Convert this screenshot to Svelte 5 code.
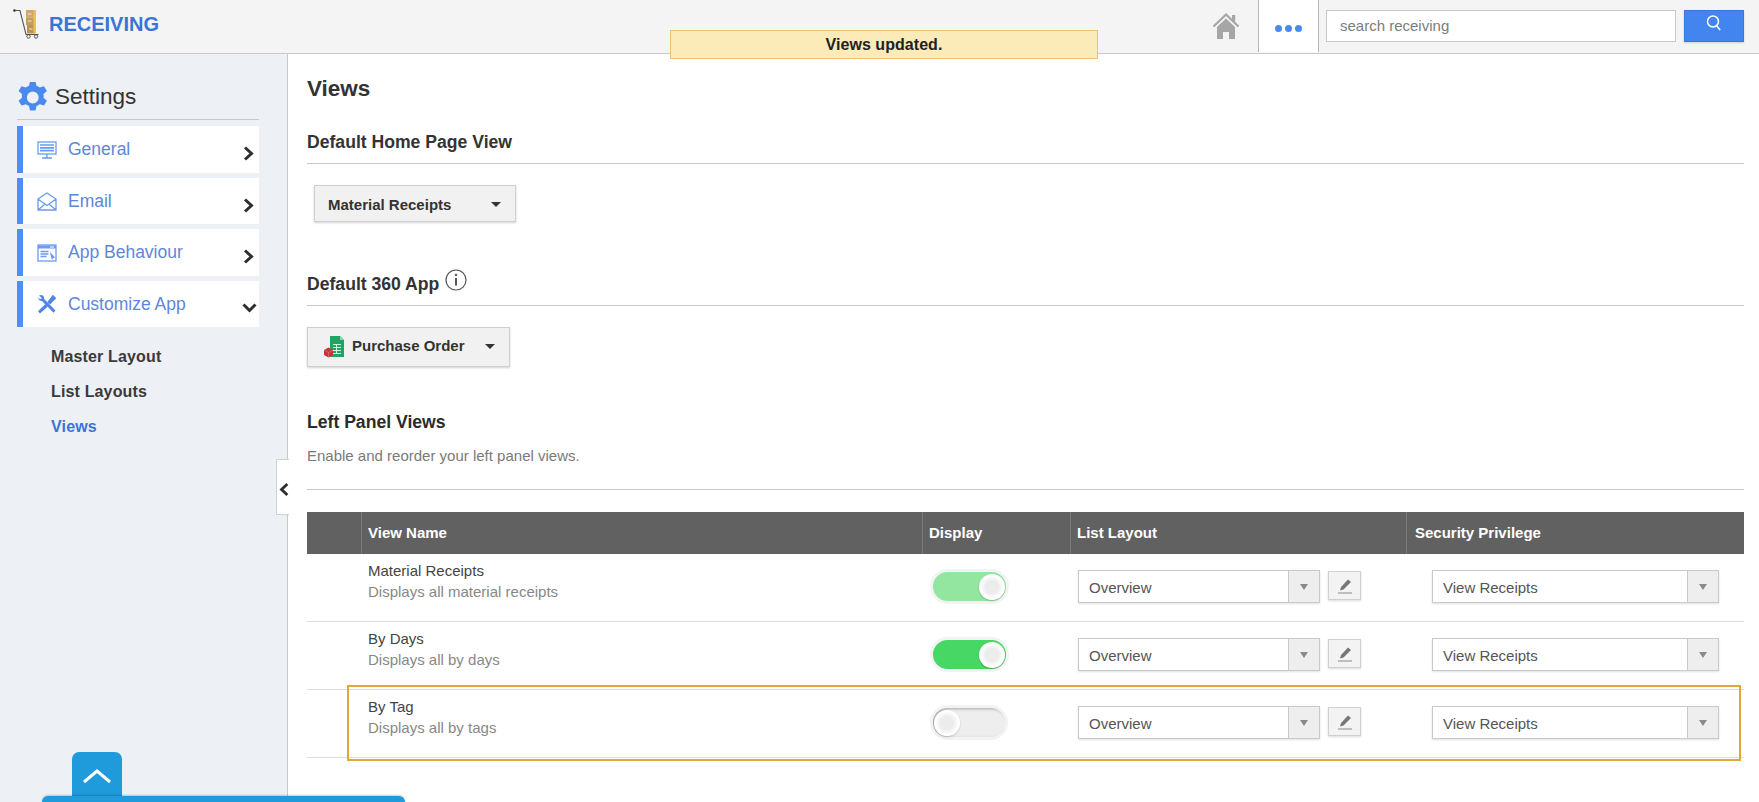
<script>
  const rows = [
    { title: 'Material Receipts', desc: 'Displays all material receipts', state: 'pale' },
    { title: 'By Days', desc: 'Displays all by days', state: 'on' },
    { title: 'By Tag', desc: 'Displays all by tags', state: 'off' }
  ];
</script>

<div class="page">
  <header class="top">
    <div class="brand">
      <svg class="logo" width="28" height="30" viewBox="0 0 28 30">
        <circle cx="1.5" cy="1.5" r="1.3" fill="#333" />
        <path d="M2 1.500H7L13 25.500H25.500" fill="none" stroke="#555" stroke-width="1.100" />
        <rect x="13" y="1" width="9" height="7.500" fill="#d0a868" />
        <rect x="13" y="8.500" width="9" height="7.500" fill="#c69c5c" />
        <rect x="14" y="16" width="8" height="8.500" fill="#bd9354" />
        <rect x="20.500" y="1" width="2.500" height="23.500" fill="#eec14a" />
        <path d="M15 5h3.500M15 12h3.500M16 20h3.500" stroke="#f5e8cc" stroke-width="1" />
        <circle cx="15.500" cy="27.500" r="1.700" fill="none" stroke="#555" />
        <circle cx="23" cy="27.500" r="1.700" fill="none" stroke="#555" />
      </svg>
      <span class="appname">RECEIVING</span>
    </div>
    <div class="tools">
      <svg class="home" width="28" height="28" viewBox="0 0 28 28">
        <path d="M1.500 14.500 14 2.500l12.500 12" fill="none" stroke="#a6a6a6" stroke-width="2.200" />
        <rect x="20" y="3" width="3.200" height="6.500" fill="#a6a6a6" />
        <path d="M14 6.500 5 15v12h6v-7h6v7h6V15z" fill="#a6a6a6" />
      </svg>
      <div class="more">
        <span></span><span></span><span></span>
      </div>
      <div class="search">search receiving</div>
      <button class="go" aria-label="Search">
        <svg width="18" height="18" viewBox="0 0 18 18" fill="none" stroke="#fff" stroke-width="1.500">
          <circle cx="8" cy="7.500" r="5.500" />
          <path d="m11.600 11.800 3.600 4.200" />
        </svg>
      </button>
    </div>
  </header>

  <div class="toast">Views updated.</div>

  <div class="body">
    <aside class="side">
      <div class="side-title">
        <svg width="31" height="31" viewBox="2 1.500 21 21">
          <path fill="#4a89f0" fill-rule="evenodd" d="M13.900 1 14.500 4a8.800 8.800 0 0 1 2.200 1.300l2.900-1 2 3.300-2.300 2a8.800 8.800 0 0 1 0 2.600l2.300 2-2 3.300-2.900-1a8.800 8.800 0 0 1-2.200 1.300l-.6 3H10.100l-.6-3a8.800 8.800 0 0 1-2.200-1.300l-2.900 1-2-3.300 2.300-2a8.800 8.800 0 0 1 0-2.600l-2.300-2 2-3.300 2.900 1a8.800 8.800 0 0 1 2.200-1.300l.6-3zM12 8a4 4 0 1 0 0 8 4 4 0 0 0 0-8z" />
        </svg>
        <span>Settings</span>
      </div>

      <nav class="menu">
        <a class="item tall">
          <svg width="20" height="18" viewBox="0 0 20 18" fill="none" stroke="#6a9bee" stroke-width="1.300">
            <rect x="1" y="1" width="18" height="12" />
            <path d="M3 4h14M3 6.800h14M3 9.600h14" stroke-width="1.700" />
            <path d="M10 13v4M5 17h10" />
          </svg>
          <span class="label">General</span>
          <svg class="chev" width="12" height="15" viewBox="0 0 12 15"><path d="M2 1.500 8.500 7.500 2 13.500" fill="none" stroke="#2e2e2e" stroke-width="3" /></svg>
        </a>
        <a class="item">
          <svg width="20" height="19" viewBox="0 0 20 19" fill="none" stroke="#6a9bee" stroke-width="1.300">
            <path d="M1 7 10 1l9 6v11H1zM1 7l9 6.500L19 7M1 18l7-6M19 18l-7-6" />
          </svg>
          <span class="label">Email</span>
          <svg class="chev" width="12" height="15" viewBox="0 0 12 15"><path d="M2 1.500 8.500 7.500 2 13.500" fill="none" stroke="#2e2e2e" stroke-width="3" /></svg>
        </a>
        <a class="item tall">
          <svg width="20" height="18" viewBox="0 0 20 18" fill="none" stroke="#6a9bee" stroke-width="1.300">
            <rect x="1" y="1" width="18" height="16" />
            <path d="M1 3h18" stroke-width="3" />
            <path d="M13 3h4" stroke="#fff" stroke-width="1" />
            <path d="M3.500 7.500h8M3.500 10h8M3.500 12.500h6" stroke-width="1.500" />
            <path d="m14 10 3 3.200-1.400.2-.4 1.700z" fill="#6a9bee" />
          </svg>
          <span class="label">App Behaviour</span>
          <svg class="chev" width="12" height="15" viewBox="0 0 12 15"><path d="M2 1.500 8.500 7.500 2 13.500" fill="none" stroke="#2e2e2e" stroke-width="3" /></svg>
        </a>
        <a class="item open">
          <svg width="20" height="20" viewBox="0 0 20 20">
            <path d="M2 1.500 4.500 1C6.300 1.400 7.300 3 7 4.800L18.500 16.500 16.500 18.800 5 7C3 7.300 1.300 5.800 1 3.800L3.200 5.300 4.800 3.900z" fill="#4f86e8" />
            <path d="M15.800.8 19.300 4.300 13 10.600l-2.600-2.700zM8.400 10.100l2.400 2.400L3 19.500 1 17.300z" fill="#4f86e8" />
          </svg>
          <span class="label">Customize App</span>
          <svg class="chev down" width="15" height="10" viewBox="0 0 15 10"><path d="M1.500 1.500 7.500 7.500 13.500 1.500" fill="none" stroke="#2e2e2e" stroke-width="3" /></svg>
        </a>
      </nav>

      <ul class="sub">
        <li>Master Layout</li>
        <li>List Layouts</li>
        <li class="cur">Views</li>
      </ul>

      <div class="collapse">
        <svg width="12" height="17" viewBox="0 0 12 17"><path d="M10 1.800 3 8.500l7 6.700" fill="none" stroke="#2e2e2e" stroke-width="3.400" /></svg>
      </div>

      <div class="up">
        <svg width="30" height="16" viewBox="0 0 30 16"><path d="M2 14 15 3l13 11" fill="none" stroke="#fff" stroke-width="3" /></svg>
      </div>
      <div class="dock"></div>
    </aside>

    <main class="main">
      <h1>Views</h1>

      <h2 class="head first">Default Home Page View</h2>
      <div class="drop one">
        <span>Material Receipts</span>
        <i class="caret"></i>
      </div>

      <h2 class="head second">
        Default 360 App
        <svg class="info" width="22" height="22" viewBox="0 0 22 22" fill="none" stroke="#555" stroke-width="1.200">
          <circle cx="11" cy="11" r="10" />
          <path d="M11 9v7.500" stroke-width="2" />
          <circle cx="11" cy="6" r="1.200" fill="#555" stroke="none" />
        </svg>
      </h2>
      <div class="drop two">
        <svg width="22" height="23" viewBox="0 0 22 23">
          <path d="M7 1h10l4 4v17H7z" fill="#1fa463" />
          <path d="M17 1v4h4z" fill="#8fd6b0" />
          <path d="M10 9.500h8M10 12.500h8M10 15.500h8M10 18.500h8M13.500 9.500v9" stroke="#d6f2e2" stroke-width="1" />
          <path d="M5.500 12.500 10 15v5l-4.500 2.500L1 20v-5z" fill="#c8343c" />
          <path d="M1 15l4.500 2.500L10 15M5.500 17.500v5" stroke="#e98087" stroke-width=".6" fill="none" />
        </svg>
        <span class="po">Purchase Order</span>
        <i class="caret"></i>
      </div>

      <h2 class="plain">Left Panel Views</h2>
      <p class="hint">Enable and reorder your left panel views.</p>
      <div class="rule"></div>

      <div class="table">
        <div class="thead">
          <div></div>
          <div>View Name</div>
          <div>Display</div>
          <div>List Layout</div>
          <div>Security Privilege</div>
        </div>
        {#each rows as row}
          <div class="row">
            <div></div>
            <div class="name">
              <div class="t">{row.title}</div>
              <div class="d">{row.desc}</div>
            </div>
            <div class="tog-cell">
              <div class="toggle {row.state}"><b></b></div>
            </div>
            <div class="layout-cell">
              <div class="select wide">
                <span>Overview</span>
                <em><i></i></em>
              </div>
              <button class="edit" aria-label="Edit">
                <svg width="16" height="16" viewBox="0 0 16 16">
                  <path d="M11 1.500 14 4 6.500 11.500 3 12.500 4 9z" fill="#777" />
                  <path d="M1 15h14" stroke="#999" stroke-width="1.200" />
                </svg>
              </button>
            </div>
            <div class="priv-cell">
              <div class="select priv">
                <span>View Receipts</span>
                <em><i></i></em>
              </div>
            </div>
          </div>
        {/each}
        <div class="mark"></div>
      </div>
    </main>
  </div>
</div>

<style>
  :global(body) {
    margin: 0;
    background: #fff;
    font-family: "Liberation Sans", Arial, sans-serif;
    color: #333;
  }
  .page {
    position: relative;
    width: 1759px;
    height: 802px;
    overflow: hidden;
    display: flex;
    flex-direction: column;
  }
  .top {
    height: 53px;
    flex: none;
    box-sizing: content-box;
    background: #f4f4f4;
    border-bottom: 1px solid #c9c9c9;
    display: flex;
    justify-content: space-between;
  }
  .brand {
    display: flex;
    align-items: center;
    padding-left: 13px;
    height: 48px;
  }
  .appname {
    margin-left: 8px;
    font-size: 20px;
    font-weight: 700;
    color: #3b74d8;
  }
  .tools {
    display: flex;
    align-items: flex-start;
    padding-right: 15px;
  }
  .home {
    margin-top: 12px;
    margin-right: 18px;
  }
  .more {
    width: 61px;
    height: 52px;
    background: #fff;
    border-left: 1px solid #b5b5b5;
    border-right: 1px solid #b5b5b5;
    display: flex;
    align-items: center;
    justify-content: center;
    gap: 2.500px;
    padding-top: 5px;
    box-sizing: border-box;
  }
  .more span {
    width: 7.500px;
    height: 7.500px;
    border-radius: 50%;
    background: #4a89f0;
  }
  .search {
    width: 350px;
    height: 32px;
    box-sizing: border-box;
    margin: 10px 8px 0 7px;
    background: #fff;
    border: 1px solid #c9c9c9;
    padding-left: 13px;
    font-size: 15px;
    line-height: 29px;
    color: #7d7d7d;
  }
  .go {
    width: 60px;
    height: 32px;
    margin: 10px 0 0;
    padding: 0 0 3px;
    background: #4285ee;
    border: 1px solid #3a78d8;
    box-shadow: 0 1px 2px rgba(0, 0, 0, .15);
  }
  .toast {
    position: absolute;
    left: 670px;
    top: 30px;
    width: 428px;
    height: 29px;
    box-sizing: border-box;
    background: #faebb9;
    border: 1px solid #e8c474;
    text-align: center;
    font-size: 16px;
    font-weight: 700;
    letter-spacing: .05px;
    line-height: 27px;
    color: #222;
  }
  .body {
    flex: 1;
    display: flex;
    min-height: 0;
  }
  .side {
    position: relative;
    flex: none;
    width: 288px;
    box-sizing: border-box;
    padding: 28px 28px 0 17px;
    background: #edf0f5;
    border-right: 1px solid #c9c9c9;
  }
  .side-title {
    height: 37px;
    box-sizing: content-box;
    display: flex;
    align-items: flex-start;
    gap: 6px;
    padding-left: 1px;
    border-bottom: 1px solid #c9c9c9;
  }
  .side-title span {
    font-size: 22.500px;
    line-height: 29px;
    color: #333;
  }
  .menu {
    margin-top: 6px;
    display: flex;
    flex-direction: column;
    gap: 5px;
  }
  .item {
    height: 46px;
    box-sizing: border-box;
    background: #fff;
    border-left: 6px solid #4f8ef7;
    display: flex;
    align-items: center;
    padding-left: 14px;
    position: relative;
  }
  .item.tall {
    height: 47px;
  }
  .item .label {
    margin-left: 11px;
    font-size: 17.500px;
    color: #5d87da;
  }
  .chev {
    position: absolute;
    right: 4px;
    top: 20px;
  }
  .chev.down {
    right: 2px;
    top: 22px;
  }
  .sub {
    list-style: none;
    margin: 12px 0 0 34px;
    padding: 0;
    font-size: 16px;
    font-weight: 700;
    color: #3a3a3a;
  }
  .sub li {
    height: 35.200px;
    line-height: 35.200px;
    letter-spacing: .15px;
  }
  .sub .cur {
    color: #3b74d8;
  }
  .collapse {
    position: absolute;
    left: 276px;
    top: 405px;
    width: 13px;
    height: 56px;
    box-sizing: border-box;
    background: #fff;
    border: 1px solid #d0d0d0;
    border-right: 0;
    display: flex;
    align-items: center;
    padding: 4px 0 0 2px;
  }
  .up {
    position: absolute;
    left: 72px;
    top: 698px;
    width: 50px;
    height: 46px;
    background: #1f9adb;
    border-radius: 7px 7px 0 0;
    display: flex;
    justify-content: center;
    padding-top: 16px;
    box-sizing: border-box;
  }
  .dock {
    position: absolute;
    left: 42px;
    top: 742px;
    width: 363px;
    height: 12px;
    background: #1f9adb;
    border-radius: 6px 6px 0 0;
    box-shadow: 0 -1px 2px rgba(0, 0, 0, .2);
    z-index: 2;
  }
  .main {
    flex: 1;
    min-width: 0;
    padding: 20px 15px 0 19px;
  }
  h1 {
    margin: 0;
    font-size: 22.500px;
    line-height: 30px;
    font-weight: 700;
    color: #333;
  }
  .head {
    margin: 0;
    font-size: 17.600px;
    line-height: 24px;
    font-weight: 700;
    padding-bottom: 9px;
    border-bottom: 1px solid #c9c9c9;
    color: #333;
    position: relative;
  }
  .head.first {
    margin-top: 26px;
  }
  .head.second {
    margin-top: 50px;
  }
  .info {
    position: absolute;
    left: 138px;
    top: -3px;
  }
  .drop {
    display: flex;
    align-items: center;
    box-sizing: border-box;
    background: #f1f1f1;
    border: 1px solid #cfcfcf;
    box-shadow: 0 1px 2px rgba(0, 0, 0, .18);
    font-size: 15px;
    font-weight: 700;
    color: #333;
  }
  .drop.one {
    width: 202px;
    height: 37px;
    margin: 21px 0 0 7px;
    padding: 1px 0 0 13px;
  }
  .drop.two {
    width: 203px;
    height: 40px;
    margin-top: 21px;
    padding: 0 0 2px 15px;
    gap: 7px;
  }
  .po {
    margin-bottom: 2px;
  }
  .caret {
    width: 0;
    height: 0;
    border-left: 5px solid transparent;
    border-right: 5px solid transparent;
    border-top: 5px solid #333;
    margin-left: auto;
    margin-right: 14px;
  }
  .plain {
    margin: 43px 0 0;
    font-size: 17.600px;
    line-height: 24px;
    font-weight: 700;
    color: #2b2b2b;
  }
  .hint {
    margin: 12px 0 0;
    font-size: 15px;
    line-height: 20px;
    color: #7a7a7a;
  }
  .rule {
    margin-top: 23px;
    border-top: 1px solid #c9c9c9;
  }
  .table {
    position: relative;
    margin-top: 22px;
    --cols: 54px 561px 148px 336px 338px;
  }
  .thead {
    display: grid;
    grid-template-columns: var(--cols);
    height: 42px;
    background: #616161;
    color: #fff;
    font-size: 15px;
    font-weight: 700;
    line-height: 42px;
  }
  .thead > div + div {
    border-left: 1px solid #7b7b7b;
    padding-left: 6px;
  }
  .thead > div:nth-child(5) {
    padding-left: 8px;
  }
  .row {
    display: grid;
    grid-template-columns: var(--cols);
    height: 68px;
    box-sizing: border-box;
    border-bottom: 1px solid #ddd;
  }
  .name {
    padding: 6px 0 0 7px;
    font-size: 15px;
    line-height: 21px;
  }
  .t {
    color: #444;
  }
  .d {
    color: #888;
  }
  .tog-cell {
    padding: 18px 0 0 11px;
  }
  .toggle {
    position: relative;
    width: 73px;
    height: 29px;
    box-sizing: border-box;
    border-radius: 15px;
    box-shadow: 0 0 0 3px #f3f3f3;
  }
  .toggle.pale {
    background: #93e6a0;
  }
  .toggle.on {
    background: #47d764;
  }
  .toggle.off {
    width: 72px;
    background: #eeeeee;
    box-shadow: 0 0 0 3px #f3f3f3, inset 2px 1px 3px rgba(0, 0, 0, .3);
  }
  .toggle b {
    position: absolute;
    top: 1.500px;
    right: 1.500px;
    width: 26px;
    height: 26px;
    border-radius: 50%;
    background: radial-gradient(circle, #ececec 0 34%, #fff 62%);
    box-shadow: 0 1px 2px rgba(0, 0, 0, .2);
  }
  .toggle.off b {
    right: auto;
    left: 1px;
  }
  .layout-cell {
    display: flex;
    align-items: flex-start;
    padding: 16px 0 0 8px;
    gap: 8px;
  }
  .priv-cell {
    padding: 16px 0 0 26px;
  }
  .select {
    display: flex;
    height: 33px;
    box-sizing: border-box;
    background: #fff;
    border: 1px solid #c9c9c9;
    box-shadow: 0 1px 2px rgba(0, 0, 0, .12);
    font-size: 15px;
    line-height: 33px;
    color: #555;
  }
  .select.wide {
    width: 242px;
  }
  .select.priv {
    width: 287px;
  }
  .select span {
    flex: 1;
    padding-left: 10px;
  }
  .select em {
    width: 30px;
    background: #eeeeee;
    border-left: 1px solid #c9c9c9;
    display: flex;
    align-items: center;
    justify-content: center;
  }
  .select i {
    border-left: 4px solid transparent;
    border-right: 4px solid transparent;
    border-top: 6px solid #8a8a8a;
  }
  .edit {
    width: 33px;
    height: 29px;
    margin-top: 1px;
    padding: 0;
    background: #f3f3f3;
    border: 1px solid #d0d0d0;
    box-shadow: 0 1px 2px rgba(0, 0, 0, .15);
    display: flex;
    align-items: center;
    justify-content: center;
  }
  .mark {
    position: absolute;
    left: 40px;
    top: 173px;
    width: 1394px;
    height: 76px;
    box-sizing: border-box;
    border: 2px solid #e0a73c;
    pointer-events: none;
  }
</style>
